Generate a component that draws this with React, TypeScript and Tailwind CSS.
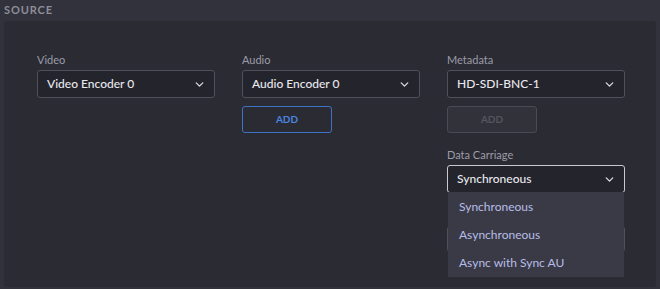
import { ChevronDown } from 'lucide-react';

const font = { fontFamily: 'Lato, "Open Sans", "Liberation Sans", sans-serif' };

function Select({ value, focused }: { value: string; focused?: boolean }) {
	return (
		<div
			className={`flex h-[28px] w-[178px] items-center justify-between rounded-[3px] border bg-[#24242c] pl-[9px] pr-[8px] text-[12px] font-medium text-[#e8e8ee] ${
				focused ? 'border-[#c9c9d2]' : 'border-[#50505b]'
			}`}
		>
			<span>{value}</span>
			<ChevronDown size={13} strokeWidth={2.5} className="text-[#d8d8e0]" />
		</div>
	);
}

function Label({ children }: { children: string }) {
	return <div className="mb-[3px] text-[11px] leading-[14px] text-[#9c9ca8]">{children}</div>;
}

export default function App() {
	return (
		<div className="h-[289px] w-[660px] overflow-hidden bg-[#32323c] pl-[4px] pr-[4px]" style={font}>
			<div className="pt-[2px] text-[11px] font-bold leading-[16px] tracking-[0.08em] text-[#8d8d99]">SOURCE</div>
			<div className="mt-[3px] h-[266px] rounded-[3px] bg-[#2b2b34] pl-[33px] pt-[32px]">
				<div className="flex gap-[27px]">
					<div className="w-[178px]">
						<Label>Video</Label>
						<Select value="Video Encoder 0" />
					</div>
					<div className="w-[178px]">
						<Label>Audio</Label>
						<Select value="Audio Encoder 0" />
						<button
							type="button"
							className="mt-[8px] h-[27px] w-[90px] rounded-[3px] border border-[#3f72c4] text-[10px] font-bold text-[#4a86e0]"
						>
							ADD
						</button>
					</div>
					<div className="relative w-[178px]">
						<Label>Metadata</Label>
						<Select value="HD-SDI-BNC-1" />
						<button
							type="button"
							className="mt-[8px] h-[27px] w-[90px] rounded-[3px] border border-[#4a4a55] bg-[#32323b] text-[10px] font-bold text-[#55555f]"
						>
							ADD
						</button>
						<div className="mt-[15px]">
							<Label>Data Carriage</Label>
							<Select value="Synchroneous" focused />
						</div>
						<div className="mt-[33px] h-[26px] w-[178px] rounded-[3px] border border-[#50505b] bg-[#24242c]" />
						<div className="absolute left-[1px] top-[139px] w-[176px] bg-[#3a3a46] py-[1px] text-[12px] text-[#b7bde6]">
							<div className="flex h-[28px] items-center pl-[11px]">Synchroneous</div>
							<div className="flex h-[28px] items-center pl-[11px]">Asynchroneous</div>
							<div className="flex h-[27px] items-center pl-[11px]">Async with Sync AU</div>
						</div>
					</div>
				</div>
			</div>
		</div>
	);
}
